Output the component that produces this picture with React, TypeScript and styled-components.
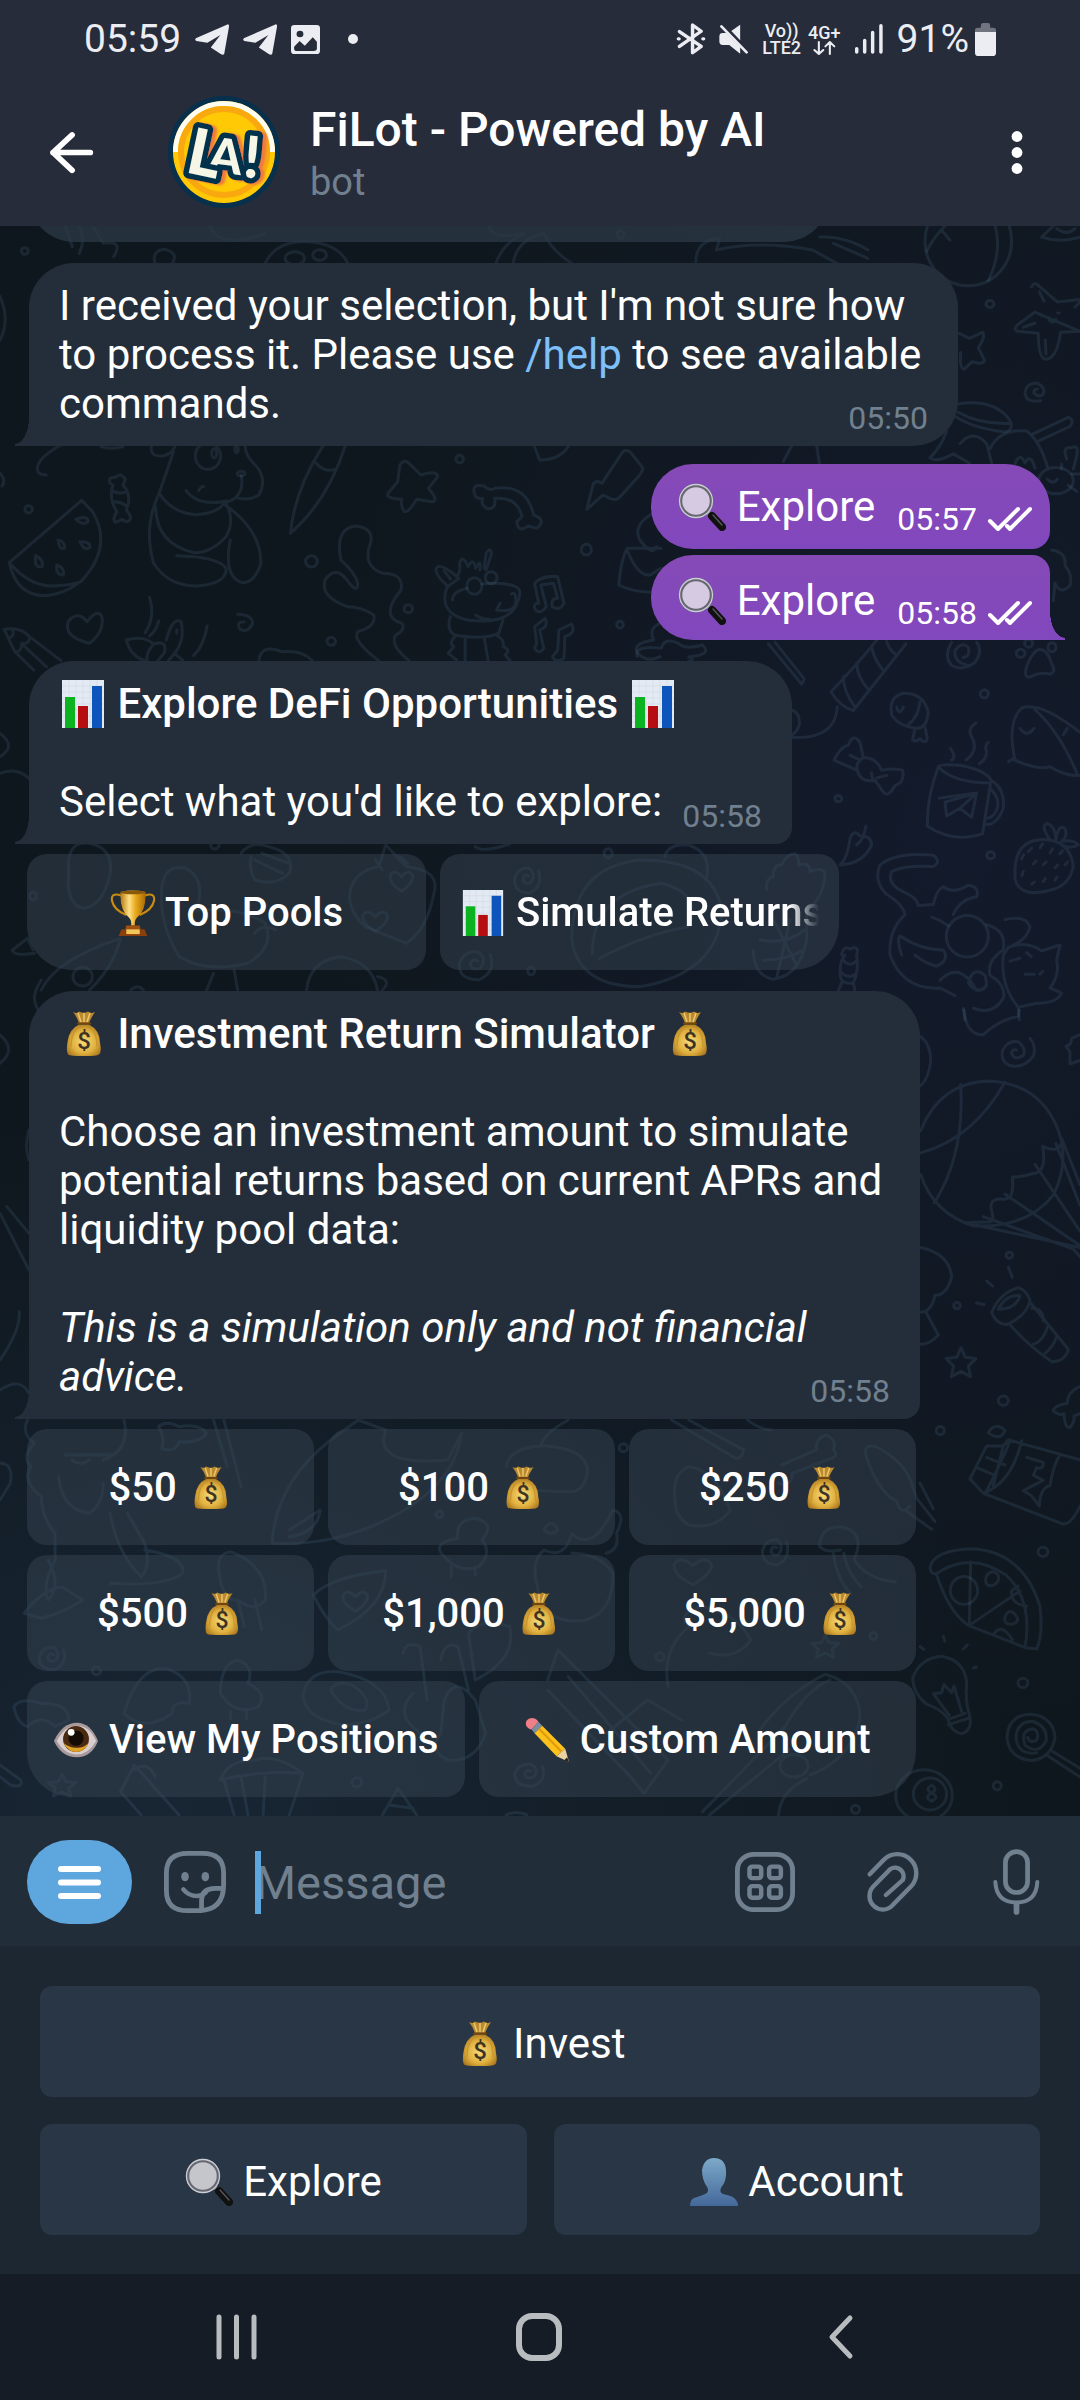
import React from "react";
import styled, { createGlobalStyle, css } from "styled-components";

const GlobalStyle = createGlobalStyle`
  *, *::before, *::after { box-sizing: border-box; }
  body { margin: 0; background: #151c25; }
  button { font: inherit; color: inherit; border: 0; padding: 0; background: none; cursor: pointer; }
`;

const colors = {
  header: "#262c3a",
  bubble: "#232e3a",
  purple: "#8147bd",
  muted: "#71808f",
  link: "#7ec0fb",
  blue: "#5ea6de",
};

const Screen = styled.div`
  display: flex;
  flex-direction: column;
  min-height: 100vh;
  color: #fff;
  font-family: Roboto, "Noto Sans", sans-serif;
  font-size: 42px;
  line-height: 49px;
`;

/* ---------- status bar ---------- */

const StatusBar = styled.div`
  display: flex;
  justify-content: space-between;
  align-items: center;
  height: 78px;
  padding: 0 84px;
  background: ${colors.header};
  color: #ecedf2;
  font-size: 39px;
`;

const Cluster = styled.div<{ $gap: number }>`
  display: flex;
  align-items: center;
  gap: ${(p) => p.$gap}px;
`;

const NetLabel = styled.div`
  display: flex;
  flex-direction: column;
  align-items: center;
  font-size: 18px;
  line-height: 17px;
  font-weight: 500;
`;

/* ---------- header ---------- */

const Header = styled.header`
  display: flex;
  align-items: center;
  height: 148px;
  padding: 0 50px;
  background: ${colors.header};
`;

const IconButton = styled.button`
  display: flex;
  flex: none;
  align-items: center;
  justify-content: center;
`;

const Avatar = styled.svg`
  flex: none;
  width: 112px;
  height: 112px;
  margin: 0 30px 0 75px;
`;

const TitleBlock = styled.div`
  flex: 1;
  min-width: 0;
  padding-top: 4px;
`;

const Title = styled.h1`
  margin: 0;
  font-size: 48px;
  line-height: 56px;
  font-weight: 500;
`;

const Subtitle = styled.div`
  color: ${colors.muted};
  font-size: 38px;
  line-height: 48px;
`;

/* ---------- chat ---------- */

const Chat = styled.main`
  position: relative;
  display: flex;
  flex-direction: column;
  align-items: flex-start;
  overflow: hidden;
  padding: 0 30px 19px 29px;
  background:
    radial-gradient(ellipse 620px 900px at 88% 38%, #131a2b, rgba(19, 26, 43, 0)),
    radial-gradient(ellipse 850px 700px at 15% 100%, #182634, rgba(24, 38, 52, 0)),
    #0f171e;
`;

const Wallpaper = styled.svg`
  position: absolute;
  top: 0;
  left: 0;
  width: 1080px;
  height: 1590px;
  fill: none;
  stroke: rgba(100, 140, 175, 0.15);
  stroke-width: 3;
  stroke-linecap: round;
  stroke-linejoin: round;
  & * { vector-effect: non-scaling-stroke; }
`;

const Bubble = styled.div<{ $max?: number; $radius?: string; $spaced?: boolean }>`
  position: relative;
  width: ${(p) => (p.$max ? "100%" : "auto")};
  max-width: ${(p) => (p.$max ? p.$max + "px" : "100%")};
  margin-top: ${(p) => (p.$spaced ? 21 : 0)}px;
  padding: 18px 30px;
  background: ${colors.bubble};
  border-radius: ${(p) => p.$radius ?? "45px 45px 45px 0"};
  &::before {
    content: "";
    position: absolute;
    left: -14px;
    bottom: 0;
    width: 14px;
    height: 28px;
    background: radial-gradient(ellipse 14px 26px at 0 0, transparent 98%, ${colors.bubble} 100%);
  }
`;

const EarlierBubble = styled.div`
  position: relative;
  width: 100%;
  max-width: 800px;
  height: 90px;
  margin: -74px 0 21px;
  border-radius: 45px;
  background: rgba(44, 57, 71, 0.75);
`;

const Outgoing = styled.div<{ $last?: boolean }>`
  position: relative;
  align-self: flex-end;
  background: linear-gradient(#864ab7, ${colors.purple});
  ${(p) =>
    p.$last
      ? css`
          margin-top: 6px;
          padding: 21px 18px 15px 27px;
          border-radius: 42px 18px 0 42px;
          &::before {
            content: "";
            position: absolute;
            right: -15px;
            bottom: 0;
            width: 15px;
            height: 28px;
            background: radial-gradient(ellipse 15px 26px at 100% 0, transparent 98%, ${colors.purple} 100%);
          }
        `
      : css`
          margin-top: 18px;
          padding: 18px 18px 18px 27px;
          border-radius: 42px 45px 18px 42px;
        `}
`;

const Time = styled.time<{ $light?: boolean }>`
  float: right;
  display: flex;
  align-items: center;
  gap: 11px;
  margin: ${(p) => (p.$light ? "21px 0 -6px 22px" : "23px 0 -6px 20px")};
  color: ${(p) => (p.$light ? "#fff" : colors.muted)};
  font-size: 32px;
  line-height: 32px;
  font-weight: 400;
`;

const Strong = styled.strong`
  font-weight: 500;
`;

const Command = styled.a`
  color: ${colors.link};
  text-decoration: none;
`;

const Keyboard = styled.div<{ $max: number }>`
  position: relative;
  display: flex;
  flex-direction: column;
  gap: 10px;
  width: 100%;
  max-width: ${(p) => p.$max}px;
  margin: 10px 0 21px -2px;
  &:last-child { margin-bottom: 0; }
`;

const KeyRow = styled.div`
  display: grid;
  grid-auto-flow: column;
  grid-auto-columns: minmax(0, 1fr);
  gap: 14px;
  &:last-child > button:first-child { border-bottom-left-radius: 45px; }
  &:last-child > button:last-child { border-bottom-right-radius: 45px; }
`;

const Key = styled.button`
  height: 116px;
  padding: 2px 20px 0;
  border-radius: 20px;
  background: rgba(54, 67, 81, 0.5);
  font-size: 40px;
  font-weight: 500;
`;

const KeyLabel = styled.span<{ $fade?: boolean }>`
  display: block;
  white-space: nowrap;
  line-height: 56px;
  ${(p) =>
    p.$fade &&
    css`
      overflow: hidden;
      text-align: left;
      mask-image: linear-gradient(to right, #000 calc(100% - 30px), transparent);
    `}
`;

/* ---------- composer ---------- */

const Composer = styled.form`
  display: flex;
  align-items: center;
  height: 130px;
  padding: 2px 40px 0 27px;
  background: #222d3a;
  color: ${colors.muted};
`;

const MenuButton = styled(IconButton)`
  width: 105px;
  height: 84px;
  margin-right: 32px;
  border-radius: 42px;
  background: ${colors.blue};
`;

const Field = styled.div`
  position: relative;
  flex: 1;
  min-width: 0;
  margin-left: 29px;
  &::after {
    content: "";
    position: absolute;
    left: 0;
    top: 0;
    width: 6px;
    height: 63px;
    background: ${colors.blue};
  }
`;

const Input = styled.input`
  display: block;
  width: 100%;
  height: 63px;
  padding: 0;
  border: 0;
  outline: 0;
  background: none;
  color: #fff;
  font: 400 47px/63px Roboto, "Noto Sans", sans-serif;
  &::placeholder { color: ${colors.muted}; opacity: 1; }
`;

const ComposerTools = styled.div`
  display: flex;
  align-items: center;
  gap: 73px;
`;

/* ---------- reply keyboard ---------- */

const ReplyPanel = styled.section`
  display: grid;
  grid-template-columns: 1fr 1fr;
  gap: 27px;
  padding: 40px 40px 39px;
  background: #1d2731;
`;

const ReplyKey = styled.button<{ $wide?: boolean }>`
  grid-column: ${(p) => (p.$wide ? "1 / -1" : "auto")};
  height: 111px;
  padding-top: 4px;
  border-radius: 12px;
  background: #293645;
`;

const NavBar = styled.nav`
  display: flex;
  flex: 1;
  align-items: center;
  justify-content: space-between;
  min-height: 126px;
  padding: 0 227px 0 216px;
  background: #151c25;
  color: #b9bcbf;
`;

/* ---------- drawings ---------- */

const EmojiBox = styled.svg<{ $size: number }>`
  display: inline-block;
  width: ${(p) => p.$size}px;
  height: ${(p) => p.$size}px;
  vertical-align: baseline;
  margin: -10px 0;
`;

const emojiArt: Record<string, React.ReactNode> = {
  bag: (
    <>
      <path d="M14 2 Q18 4 20 1.500 Q25 4 29 1.500 Q32 4 36 2 Q32 8 30 13 H20 Q18 7 14 2Z" fill="#bb8a2c" />
      <path d="M19 3 L22 12 M25 3 V12 M31 3 L28 12" stroke="#ecc872" strokeWidth="1.500" />
      <path d="M20 14.500 H30 Q41 20 41 33 Q43 42 40 44.500 Q38 46 25 46 Q11 46 9 44.500 Q7 41 8.500 32 Q10 19 20 14.500Z" fill="url(#bagFill)" />
      <path d="M18 18 Q12 25 12 37 M33 18 Q38 26 38 37" stroke="#c9942f" strokeWidth="1.300" fill="none" />
      <path d="M19 13.500 H31" stroke="#70450f" strokeWidth="2.200" strokeLinecap="round" />
      <text x="25" y="39" textAnchor="middle" fontFamily="Roboto, sans-serif" fontWeight="500" fontSize="24" fill="#3f3424">$</text>
    </>
  ),
  lens: (
    <>
      <path d="M30 29 L36 35" stroke="#8d8d92" strokeWidth="4" />
      <path d="M34 33 L44 44" stroke="#111" strokeWidth="8" strokeLinecap="round" />
      <path d="M35 32 L44 42" stroke="#55555a" strokeWidth="1.500" strokeLinecap="round" />
      <circle cx="18" cy="18" r="15.500" fill="#e6e6ea" fillOpacity=".82" stroke="#67676f" strokeWidth="3.500" />
      <circle cx="18" cy="18" r="16.500" fill="none" stroke="#c9ced6" strokeWidth="1.300" />
    </>
  ),
  chart: (
    <>
      <rect x="3" y="0" width="42" height="48" fill="#e3eaf3" />
      <path d="M3 6H45M3 12H45M3 18H45M3 24H45M3 30H45M3 36H45M3 42H45M10 0V48M17 0V48M24 0V48M31 0V48M38 0V48" stroke="#d3dbe6" strokeWidth=".7" />
      <rect x="6" y="17" width="10" height="31" fill="#0bb321" />
      <rect x="19" y="26" width="10" height="22" fill="#b60d10" />
      <rect x="33" y="6" width="10" height="42" fill="#0d55bd" />
    </>
  ),
  trophy: (
    <>
      <path d="M12 6 Q1 2 2 11 Q4 21 17 26 M36 6 Q47 2 46 11 Q44 21 31 26" stroke="#c98a12" strokeWidth="2.200" fill="none" />
      <path d="M11 2 Q24 -1 37 2 Q38 22 28 29 Q25 32 26 37 H22 Q23 32 20 29 Q10 22 11 2Z" fill="url(#cupFill)" />
      <ellipse cx="24" cy="2.500" rx="13" ry="2" fill="#8a5a08" />
      <path d="M17 37 H31 L32 41 H16Z" fill="#a2500f" />
      <path d="M12 41 H36 L39 48 H9Z" fill="#8a3f0c" />
      <rect x="17" y="41" width="14" height="5" fill="#f2c65a" />
    </>
  ),
  eye: (
    <>
      <path d="M1 25 Q10 6 25 6 Q39 6 47 25 Q40 42 25 42 Q9 42 1 25Z" fill="#a8999b" />
      <path d="M4 25 Q12 9 25 9 Q38 9 45 25 Q37 39 25 39 Q12 39 4 25Z" fill="#d9cfd1" />
      <circle cx="24" cy="23" r="13.500" fill="#4a2a10" />
      <path d="M11 27 Q16 36.500 24 36.500 Q33 36.500 37 27 Q31 33 24 32 Q17 32 11 27Z" fill="#e0a224" />
      <circle cx="24" cy="22" r="8" fill="#160c05" />
      <circle cx="19" cy="16" r="3.500" fill="#fff" />
    </>
  ),
  pencil: (
    <>
      <path d="M2 8 Q1 2 8 1 Q13 1 15 5 L8 13 Q3 12 2 8Z" fill="#ee7f86" />
      <path d="M15 5 L19 9 L11 17 L8 13Z" fill="#7b8ea0" />
      <path d="M19 9 L43 33 L34 41 L11 17Z" fill="#fcc21b" />
      <path d="M16 12.500 L39 36" stroke="#e29b0c" strokeWidth="2.500" />
      <path d="M43 33 L47 47 L34 41Z" fill="#ecd2a0" />
      <path d="M45 42 L47 47 L42 45Z" fill="#222" />
    </>
  ),
  person: (
    <path
      d="M24 0 Q35 0 36 12 Q37 23 31 30 Q29 34 33 36 Q44 38 46 42 Q48 44 48 48 H0 Q0 42 4 40 Q14 37 17 35 Q19 32 17 29 Q12 22 12 12 Q14 0 24 0Z"
      fill="url(#personFill)"
    />
  ),
};

const Emoji = ({ name, size = 48 }: { name: string; size?: number }) => (
  <EmojiBox $size={size} viewBox="0 0 48 48" aria-hidden="true">
    {emojiArt[name]}
  </EmojiBox>
);

type GlyphProps = { w: number; h: number; box: string; children: React.ReactNode };
const Glyph = ({ w, h, box, children }: GlyphProps) => (
  <svg width={w} height={h} viewBox={box} preserveAspectRatio="none" fill="none" stroke="currentColor" strokeLinecap="round" strokeLinejoin="round" overflow="visible" aria-hidden="true">
    {children}
  </svg>
);

const Plane = () => (
  <Glyph w={34} h={31} box="567 76 99 91">
    <path d="M663 77 Q667 78 666 84 L652 164 Q650 168 643 165 L613 145 L641 108 L603 131 L571 126 Q564 122 571 117Z" fill="currentColor" stroke="none" />
  </Glyph>
);

const Checks = () => (
  <Glyph w={44} h={24} box="0 0 44 24">
    <path d="M2 14 L10 22 L30 2 M19 19 L22 22 L42 2" strokeWidth="4" />
  </Glyph>
);

const starPath = "M0 -26 L8 -8 L28 -6 L14 8 L18 28 L0 18 L-18 28 L-14 8 L-28 -6 L-8 -8Z";
const spiralPath = "M24 -14 Q34 14 6 26 Q-26 26 -26 2 Q-20 -20 4 -18 Q20 -8 8 8 Q-8 12 -8 0 Q-4 -8 4 -4";
const heartPath = "M0 34 Q-34 10 -30 -14 Q-20 -34 0 -10 Q20 -36 30 -12 Q30 10 0 34Z";

const Doodles = () => (
  <Wallpaper viewBox="0 226 1080 1590" aria-hidden="true">
    <defs>
      <radialGradient id="bagFill" cx=".5" cy=".55" r=".6">
        <stop offset="0" stopColor="#f6dc7c" />
        <stop offset=".6" stopColor="#e0b13f" />
        <stop offset="1" stopColor="#a8741c" />
      </radialGradient>
      <linearGradient id="cupFill" x1="0" x2="1" y1="0" y2="0">
        <stop offset="0" stopColor="#b87a0a" />
        <stop offset=".35" stopColor="#ffe08a" />
        <stop offset=".6" stopColor="#e9a91c" />
        <stop offset="1" stopColor="#a86a06" />
      </linearGradient>
      <linearGradient id="personFill" x1="0" x2="0" y1="0" y2="1">
        <stop offset="0" stopColor="#7da9c8" />
        <stop offset="1" stopColor="#44689a" />
      </linearGradient>
    </defs>

    {/* strip under the header */}
    <g transform="translate(0 220) scale(.6888 .3333)">
      <path d="M95 20 L105 80 M115 20 Q125 60 115 100 M135 20 L150 70 Q180 60 165 110 M305 20 Q320 90 385 40 M225 130 Q220 90 240 88 Q260 100 250 130 M385 130 Q400 65 440 65 Q490 65 505 130 M710 20 Q715 60 760 40 Q730 70 720 130 M745 130 Q750 60 790 40 Q800 90 830 130 M1010 130 Q1010 60 1045 55 L1040 90 Q1100 60 1180 90 L1215 130 M1190 50 Q1230 50 1260 90 M1210 70 L1260 115" />
      <ellipse cx="428" cy="115" rx="14" ry="20" />
      <ellipse cx="464" cy="105" rx="10" ry="16" />
      <ellipse cx="36" cy="93" rx="5" ry="10" />
      <ellipse cx="901" cy="43" rx="5" ry="12" />
      <path d="M0 230 Q15 300 0 360" />
    </g>

    {/* right column, upper half */}
    <g transform="translate(760 226) scale(.3333 .5063)">
      <ellipse cx="625" cy="30" rx="130" ry="88" />
      <path d="M685 108 Q735 40 695 -20 M500 50 Q530 10 590 -20 M545 8 l25 20 M845 22 L880 0 M845 22 Q900 34 960 22 M890 5 Q920 20 945 5" />
      <path d="M815 120 Q822 108 840 120 L892 150 L960 145 M960 208 L902 210 Q890 264 856 263 Q835 262 835 212 L772 208 Q758 203 775 194 L825 170 Z M945 160 L960 150 M868 186 Q880 194 888 184 M845 178 h5 M893 172 h5 M856 225 l2 28 M790 200 l35 -8 M838 130 l14 18" />
      <path d="M598 212 L628 222 L668 210 Q678 218 655 240 L674 266 Q665 275 637 268 L612 283 Q598 280 602 250" />
      <path d="M842 345 Q795 350 795 328 Q800 310 830 310 Q858 318 850 332 Q835 340 822 330 Q820 322 832 322" />
      <path d="M588 352 Q700 340 748 382 Q765 402 735 407 Q640 400 585 376 M595 368 Q660 392 748 390" />
      <path d="M560 405 Q545 435 510 458 Q530 468 580 450 L628 468 M600 430 Q640 400 680 430 L695 468 M690 440 Q720 400 800 405 Q840 425 862 475 M815 412 Q870 395 925 378 Q945 382 930 396 L835 425 M765 470 Q780 445 795 468 Q812 448 825 478 M920 460 Q905 435 935 438 Q958 430 950 455 L940 480" />
      <ellipse cx="888" cy="503" rx="52" ry="26" />
      <path d="M862 500 Q880 512 892 500 M70 465 L95 434 M170 434 L178 468 M905 480 V470 M935 490 h25 M925 512 l25 12" />
      <path d="M875 640 Q920 645 915 670 Q940 690 930 710 Q900 730 885 705 L880 740" />
      <path d="M25 825 L125 905 L133 895 L45 822 M213 920 Q300 860 350 818 M213 920 Q240 950 280 957 L438 825 M250 890 Q250 920 285 950 M290 862 Q290 890 325 915 M335 830 Q340 855 372 880 M380 820 Q385 835 405 845 M232 950 Q225 1015 95 1010 M92 955 Q120 960 118 985 Q108 1005 90 1005" />
      <path d="M575 822 Q550 850 575 868 Q610 880 645 862 Q670 840 650 822 M625 868 Q580 862 585 838 Q605 820 625 832 Q632 850 610 852" />
      <path d="M800 870 Q790 895 812 890 Q840 880 870 885 Q890 880 875 865 Q860 830 830 838 Q810 850 800 870Z" />
      <ellipse cx="782" cy="844" rx="13" ry="8" />
      <ellipse cx="806" cy="824" rx="12" ry="8" />
      <ellipse cx="876" cy="832" rx="12" ry="9" />
      <path d="M395 965 Q385 930 430 923 Q490 922 505 960 Q500 995 465 992 Q410 985 395 965Z M410 950 q8 20 20 0 M480 940 Q475 970 445 985 M465 992 L458 1015 Q470 1020 480 1012 Q495 1025 502 1012 L495 990" />
      <path d="M222 1055 Q240 1030 265 1025 Q280 1000 300 1020 L310 1050 Q350 1050 365 1075 Q400 1070 428 1075 Q435 1100 405 1105 Q385 1130 370 1118 L345 1095 Q300 1100 292 1075 Z M310 1050 Q285 1060 292 1075 M335 1080 Q335 1095 345 1095 M270 1045 l30 10 M350 1090 l30 -5" />
      <path d="M535 1068 Q500 1130 502 1185 Q580 1220 668 1200 L693 1095 Q680 1075 600 1065 Q540 1062 535 1068 Q580 1100 690 1100 M693 1095 Q735 1110 730 1150 Q710 1185 675 1182 M692 1112 Q720 1130 712 1150 Q700 1170 680 1170 M538 1130 L650 1120 L635 1168 L600 1150 L560 1165 L555 1138 M600 1150 L650 1120 L555 1138 M575 1055 Q590 1050 572 1032 M618 1055 Q660 1035 632 1005 Q625 990 648 982 M658 1062 Q685 1050 678 1035 Q675 1025 685 1020" />
      <path d="M745 1058 Q760 1050 765 1055 Q740 980 785 952 Q840 938 960 1000 M765 1055 Q830 1075 870 1068 Q920 1088 960 1085 M825 955 Q900 1000 950 1080 M780 992 Q800 1012 822 992 M910 1005 L922 992" />
      <path d="M240 1262 Q262 1250 270 1210 Q280 1190 300 1205 Q335 1205 335 1222 Q310 1260 240 1262 M290 1222 Q310 1215 318 1185" />
      <path d="M765 1270 Q770 1215 840 1212 Q930 1210 940 1265 Q930 1300 880 1310 Q780 1330 765 1290Z M870 1212 Q840 1185 862 1180 Q885 1185 888 1212 Q895 1180 915 1190 Q925 1205 905 1215 Q940 1212 955 1222 Q930 1232 905 1222" />
      <path d="M785 1250 l6 -8 M805 1235 l10 -6 M840 1228 l8 -8 M870 1238 l8 -8 M900 1240 l8 -6 M790 1275 l-4 8 M820 1260 l8 -6 M850 1262 l8 -6 M885 1268 l8 -6 M915 1262 l8 -6 M815 1300 l8 -4 M850 1295 l6 -6 M885 1292 l6 -6" />
      <path d="M435 1360 Q430 1340 380 1320 Q340 1295 360 1262 Q410 1235 520 1243 Q545 1255 520 1265 Q430 1262 395 1275 Q380 1300 430 1315 Q470 1325 475 1342 L520 1340 Q530 1310 550 1305 Q580 1320 625 1302 Q660 1305 650 1325 Q600 1330 580 1360 M435 1360 Q385 1390 390 1440 Q430 1510 540 1505 L585 1520 M425 1440 Q410 1410 420 1402 Q480 1430 550 1430 Q570 1450 530 1462 Q500 1458 465 1440 M515 1365 Q540 1370 565 1382" />
      <ellipse cx="622" cy="1403" rx="63" ry="41" />
      <path d="M680 1380 Q740 1390 730 1430 Q680 1450 690 1480 Q740 1500 730 1525 Q700 1560 640 1545 M735 1370 Q800 1360 810 1385 Q800 1410 760 1420 M730 1440 Q720 1500 775 1543 L830 1535 Q890 1535 905 1515 L870 1505 Q900 1480 890 1450 L900 1420 L845 1432 Q800 1410 745 1425Z M750 1452 l30 -6 M800 1435 l14 8 M795 1478 l28 0 M840 1478 l8 -6 M540 1490 Q600 1450 650 1510 Q690 1510 675 1480 Q640 1460 625 1495 Q650 1520 680 1500 M610 1545 L615 1568 M775 1543 L778 1568" />
      <path d="M245 1440 Q250 1420 268 1428 Q300 1420 290 1440 Q298 1470 280 1495 Q240 1500 240 1475 Q240 1450 255 1440 M250 1450 Q270 1465 288 1452 M245 1475 Q265 1488 285 1478 M245 1495 L235 1510 M280 1495 L285 1510" />
      <ellipse cx="690" cy="154" rx="12" ry="7" />
      <ellipse cx="673" cy="924" rx="12" ry="8" />
      <ellipse cx="235" cy="1131" rx="10" ry="6" />
      <ellipse cx="692" cy="1243" rx="12" ry="7" />
      <path d="M20 1310 Q15 1290 40 1285 Q40 1260 65 1262 Q80 1240 105 1240 Q120 1250 115 1262 Q150 1255 150 1275 Q190 1265 195 1280 Q190 1330 140 1350 L140 1410 Q120 1480 40 1488 Q-20 1480 -20 1430 M0 1410 Q80 1420 135 1390 M10 1450 Q80 1450 130 1430 M90 1370 L50 1485 M40 1370 L110 1460" />
    </g>

    {/* right column, lower half */}
    <g transform="translate(760 1010) scale(.3333 .5141)">
      <path d="M612 0 Q620 50 670 48 Q715 20 775 12 L778 0 M482 52 Q512 65 512 100 Q505 135 482 147" />
      <path d="M810 55 Q830 70 820 90 Q790 115 750 108 Q720 100 728 78 Q745 58 775 62 Q800 75 790 88 Q765 100 755 85 Q755 75 770 78" />
      <path d="M960 48 L935 55 Q935 70 918 70 L930 82 L930 105 L960 98" />
      <path d="M482 235 Q540 140 690 138 Q860 145 905 255 Q920 310 880 360 Q800 425 640 420 Q520 395 482 320 M602 145 Q615 280 523 375 M482 278 Q640 250 735 140 M905 258 Q895 280 848 265 Q862 315 820 318 Q780 325 757 325 Q765 370 730 368 Q690 365 693 385 Q705 410 690 412 L615 414 L960 462 M888 260 L960 380 M905 250 L960 340 M825 300 L960 430 M735 358 L960 458 M670 402 L940 465 L960 480" />
      <path d="M482 462 Q570 475 575 520 Q560 555 525 555 Q520 575 500 585 L482 588 M500 590 Q520 615 535 632 Q510 650 482 650" />
      <path d="M695 588 Q720 550 775 540 Q800 545 810 565 Q800 595 740 612 Q705 610 695 588Z M715 582 Q740 552 780 556 Q770 580 720 582 M750 612 Q800 650 875 684 Q915 684 925 660 L812 570 M815 580 Q850 580 850 605 M865 612 Q850 645 820 650 M890 635 Q880 655 855 668 M745 500 l12 20 M680 527 l18 10 M650 570 l22 3" />
      <path transform="translate(603 684) scale(1.600 1.050)" d={starPath} />
      <path d="M960 732 Q920 745 922 765 Q880 770 880 780 Q900 790 912 785 Q915 815 930 812 Q945 800 942 790 L960 785" />
      <path d="M630 912 L680 848 L730 848 L745 836 L960 875 M630 912 L670 940 L910 1000 Q935 1000 960 965 M670 940 Q755 920 785 838 M680 935 Q725 880 750 838 M680 870 L735 885 M650 890 L705 905 M730 848 L700 925 M685 822 Q705 800 735 818 Q720 840 685 822 M800 870 L850 880 Q850 895 830 890 L820 905 L850 915 L790 935 L815 945 L838 965 Q840 930 870 925 Q880 885 900 865" />
      <path d="M510 1085 Q520 1050 640 1048 Q790 1055 840 1160 Q850 1215 830 1243 L795 1240 Q820 1150 740 1100 Q640 1055 545 1090 Q515 1105 510 1085 M530 1098 Q565 1170 625 1197 L795 1240 M632 1073 L628 1197 L780 1130 M700 1215 Q725 1190 757 1225 M800 1160 Q750 1155 755 1130 L775 1120" />
      <ellipse cx="612" cy="1129" rx="41" ry="27" />
      <path d="M680 1100 Q700 1085 715 1100 Q720 1115 695 1120 Q670 1120 680 1100Z M735 1180 Q750 1160 770 1180 Q780 1190 755 1195 Q730 1195 735 1180Z" />
      <path d="M565 1380 Q550 1362 500 1350 Q460 1330 458 1300 Q480 1260 545 1257 Q615 1265 620 1310 Q615 1345 628 1370 Q640 1400 605 1408 Q570 1402 565 1380 L615 1368 M565 1390 L625 1378 M568 1372 L520 1330 L545 1328 L552 1312 L575 1328 L582 1315 L605 1365 M550 1218 l5 10 M480 1238 l12 6 M610 1243 l12 -8 M640 1280 l10 -2" />
      <path d="M741 1415 Q745 1370 815 1370 Q880 1375 885 1415 Q875 1455 815 1460 Q745 1455 741 1415Z M830 1445 Q770 1450 768 1412 Q775 1382 820 1384 Q865 1395 858 1422 Q835 1450 795 1430 Q780 1400 820 1398 Q840 1405 830 1420 Q810 1428 803 1415 M872 1440 L960 1475 M862 1450 L960 1492" />
      <ellipse cx="492" cy="1528" rx="85" ry="50" />
      <ellipse cx="510" cy="1525" rx="50" ry="31" />
      <path d="M515 1508 q20 8 0 15 q-22 -8 0 -15 M515 1523 q25 8 0 16 q-25 -8 0 -16" />
      <path d="M325 880 Q300 840 350 850 Q440 880 460 930 L470 950 L525 995 M440 975 L515 1010 M480 920 L520 970 M325 880 Q360 940 410 955 Q420 985 450 965" />
      <path d="M55 1568 Q60 1520 140 1495 M0 1400 Q80 1330 195 1292 Q300 1310 300 1380 Q270 1460 150 1488" />
      <ellipse cx="102" cy="1470" rx="42" ry="22" />
      <ellipse cx="748" cy="477" rx="10" ry="6" />
      <ellipse cx="591" cy="575" rx="10" ry="6" />
      <ellipse cx="730" cy="760" rx="15" ry="9" />
      <ellipse cx="541" cy="818" rx="12" ry="8" />
      <ellipse cx="849" cy="1054" rx="15" ry="9" />
      <ellipse cx="789" cy="1309" rx="15" ry="9" />
      <ellipse cx="712" cy="1509" rx="12" ry="8" />
    </g>

    {/* gap left of the outgoing messages */}
    <g transform="translate(0 440) scale(.4209 .3333)">
      <path d="M145 15 Q80 60 90 95 Q95 105 110 105 M240 20 Q265 30 292 20 M0 100 Q15 120 5 138" />
      <path d="M262 130 Q255 110 275 112 Q285 95 298 118 L292 135 Q315 165 300 210 Q320 240 300 245 L290 238 L275 247 Q265 240 278 215 Q258 180 268 135 M265 152 Q285 165 300 155 M270 185 Q290 185 302 200" />
      <path d="M194 181 L22 368 Q75 445 135 437 Q175 435 192 425 Q270 320 220 215Z M22 368 Q40 470 110 467 Q155 460 185 430" />
      <path d="M180 238 Q205 225 210 243 Q200 260 180 238 M138 300 Q155 305 153 325 Q140 330 138 300 M190 305 Q215 305 214 322 Q200 335 190 305 M85 347 Q105 360 100 380 Q80 385 85 347 M135 375 Q155 385 150 405 Q132 405 135 375" />
      <path d="M412 35 Q395 100 378 160 Q340 260 365 370 Q400 440 470 438 Q540 430 537 385 Q520 350 420 347 M378 160 Q410 220 465 224 Q520 220 535 185 Q560 240 537 290 Q500 340 460 338 Q370 310 370 200 M360 20 Q355 50 385 48 Q405 45 415 22 M535 195 Q620 270 620 370 Q605 430 575 428 Q530 410 547 300 M583 15 Q580 45 610 80 Q635 120 615 165 Q590 185 560 172 Q580 150 573 105 M442 152 Q470 200 540 183 M472 152 Q480 135 484 140 M560 172 Q550 185 535 187" />
      <ellipse cx="494" cy="48" rx="30" ry="40" />
      <ellipse cx="509" cy="40" rx="6" ry="14" />
      <ellipse cx="562" cy="28" rx="4" ry="10" />
      <ellipse cx="573" cy="101" rx="9" ry="7" />
      <path d="M767 18 Q700 150 690 280 Q780 180 820 18 M748 65 Q770 100 795 88" />
      <path d="M950 75 Q960 55 972 70 L1000 105 Q1040 90 1040 110 L1018 145 Q1045 185 1025 185 L990 178 Q970 220 960 215 Q950 190 955 178 Q915 175 922 160 L945 125Z" />
      <path d="M1127 160 Q1120 130 1150 138 Q1165 155 1175 145 Q1250 130 1268 225 Q1300 240 1275 265 L1255 258 Q1230 280 1228 245 L1240 230 Q1230 170 1175 175 Q1180 205 1160 207 Q1140 195 1147 175 Q1130 178 1127 160Z" />
      <path d="M1480 35 Q1490 25 1500 40 L1525 80 Q1530 90 1520 105 L1470 175 Q1460 185 1433 165 L1394 208 L1410 130 Q1420 120 1430 130Z M1270 20 L1282 60 Q1330 60 1350 20" />
      <path d="M1565 210 Q1500 250 1520 300 Q1550 350 1560 320 M1570 325 H1490 Q1475 360 1470 435 Q1500 455 1550 457 M1490 330 Q1515 410 1545 405 L1570 385 M1568 550 Q1540 565 1553 600 Q1500 610 1515 640 Q1540 670 1568 650" />
      <path d="M900 662 Q835 600 850 575 Q895 560 888 525 Q860 500 825 500 Q760 470 772 420 Q800 370 830 430 Q850 460 850 430 Q845 400 810 360 Q795 265 845 258 Q890 265 880 310 Q860 380 910 400 Q960 400 953 450 Q900 530 955 550 Q965 570 940 585 Q925 615 972 662" />
      <path d="M1065 440 Q1025 395 1040 380 Q1055 375 1085 410 Q1095 395 1092 370 Q1098 340 1112 380 Q1125 350 1130 385 Q1145 350 1140 390 M1150 385 L1155 340 Q1165 320 1168 340 L1155 390 M1062 440 Q1040 520 1110 540 Q1200 555 1225 500 Q1245 450 1225 440 Q1200 425 1145 432 M1090 415 Q1075 430 1062 440 M1075 480 Q1075 455 1110 445 M1215 462 Q1225 455 1225 475 Q1230 520 1180 510 L1188 490 M1070 530 Q1060 570 1080 585 Q1150 600 1185 580 L1195 540 M1130 525 Q1145 540 1165 538 M1105 590 V662 M1150 590 L1160 662 M1082 588 Q1065 610 1078 620 L1065 640 L1085 660 M1182 588 Q1200 600 1195 620 Q1215 630 1200 645 L1212 662 M1055 392 l15 25" />
      <ellipse cx="1127" cy="438" rx="18" ry="25" />
      <ellipse cx="1167" cy="413" rx="14" ry="18" />
      <path d="M1280 490 L1270 430 Q1290 405 1325 410 L1340 490 Q1330 515 1312 500 Q1308 475 1325 475 L1315 430 L1285 435 L1298 500 Q1285 525 1272 510 Q1265 490 1280 490 M1275 610 L1270 560 L1295 535 Q1305 560 1282 570 L1292 625 Q1280 645 1270 625Z M1325 630 L1328 570 L1358 552 Q1370 580 1342 590 L1340 655 Q1320 670 1313 650Z" />
      <path d="M207 545 Q235 500 243 535 Q245 580 212 610 Q150 590 162 545 Q185 510 207 545Z" />
      <path d="M565 523 Q600 525 600 550 Q590 580 570 568 Q560 545 580 545 M355 472 Q370 530 345 578 M377 543 Q370 575 355 588 M492 558 Q485 615 460 647" />
      <path d="M395 600 Q410 530 430 545 Q440 600 415 640 L435 662 M300 600 Q340 585 365 612 Q400 600 390 640 L375 662 M300 600 Q310 650 345 662 M365 612 Q345 640 350 662 M420 570 v10 M415 640 L400 662" />
      <path d="M10 568 Q50 560 70 590 L145 662 M10 568 L35 635 L80 690 M35 635 Q50 640 52 610 Q70 615 70 590 M52 612 L110 680 M20 595 Q35 590 30 572 M615 662 Q620 610 670 635 Q720 630 742 662" />
      <ellipse cx="68" cy="208" rx="9" ry="11" />
      <ellipse cx="740" cy="364" rx="14" ry="17" />
      <ellipse cx="1092" cy="57" rx="9" ry="12" />
      <ellipse cx="1393" cy="329" rx="12" ry="16" />
      <ellipse cx="970" cy="506" rx="10" ry="12" />
      <ellipse cx="787" cy="604" rx="10" ry="12" />
      <ellipse cx="1473" cy="554" rx="8" ry="10" />
    </g>

    {/* around the first inline keyboard */}
    <g transform="translate(0 640) scale(.6888 .3333)">
      <path d="M925 50 Q920 15 960 25 Q965 -10 985 10 Q995 30 1020 15 Q1035 45 1000 50 Q1010 62 1000 64 M0 280 Q25 320 0 350 M0 400 Q25 380 42 415" />
      <path d="M100 700 Q95 600 130 610 Q165 625 160 700 Q150 800 120 805 Q95 790 100 700Z M350 640 Q365 600 390 620 Q430 640 420 700 Q400 740 370 720 Q360 680 365 650 M370 660 L410 700 M380 640 L420 670" />
      <path d="M235 740 Q240 670 270 685 Q300 720 285 810 M285 810 Q350 800 385 850 Q400 920 360 970 Q300 1000 260 950 Q230 850 235 740 M370 880 Q380 850 400 870 M310 1000 L300 1050 M340 990 L345 1050 M445 1050 Q450 960 495 950 Q540 965 548 1050 M548 1010 Q570 1020 555 1050" />
      <path d="M510 740 Q520 690 550 680 L560 615 L590 680 Q640 690 630 760 Q620 870 590 910 L530 860 Q500 800 510 740Z M545 660 l10 30 M580 650 l12 20" />
      <path transform="translate(583 720) scale(.55 1)" d={heartPath} />
      <path transform="translate(545 840) scale(.6 1)" d={heartPath} />
      <path transform="translate(765 715) scale(.7 1.700)" d={spiralPath} />
      <path transform="translate(690 970) scale(.9 1.900)" d={spiralPath} />
      <path d="M830 900 Q830 680 930 660 Q1040 660 1048 820 Q1040 1000 930 1040 Q840 1040 830 900Z M860 940 Q860 760 960 730 Q1020 760 1000 860 Q940 880 870 955 M965 650 Q970 610 1000 615 Q1035 640 1025 720 M690 620 Q700 640 740 612" />
      <path d="M60 1050 Q80 960 175 895 Q165 980 130 1050 M50 940 Q20 950 18 930 L40 895 L48 930 M190 1050 Q200 1030 208 1050" />
      <ellipse cx="120" cy="1010" rx="14" ry="28" />
      <ellipse cx="312" cy="615" rx="6" ry="12" />
      <ellipse cx="883" cy="640" rx="6" ry="14" />
      <ellipse cx="771" cy="993" rx="5" ry="12" />
      <ellipse cx="48" cy="768" rx="5" ry="12" />
    </g>
    <g transform="translate(0 980) scale(.6888 .3333)">
      <path d="M0 165 Q25 210 0 250 M42 450 Q35 500 42 540 M0 700 L42 870 M10 680 L42 760 M0 1140 Q30 1050 28 995 M0 1230 Q30 1190 42 1240 M60 100 Q40 60 60 0" />
    </g>

    {/* behind the amounts keyboard */}
    <g transform="translate(0 1400) scale(.6888 .3333)">
      <path d="M0 190 Q20 190 15 250 L0 300 M40 60 Q30 100 50 130 Q30 170 45 200 Q30 240 60 290 Q60 350 80 400 L80 480 Q60 560 70 600 Q90 560 70 480 M180 60 Q190 150 150 180 M95 165 L165 165 M105 180 Q115 200 130 180 M85 230 Q90 330 130 340 Q150 310 150 250 M160 340 Q170 460 205 530 Q220 500 210 430 L185 340 M210 450 Q270 470 265 520 Q240 560 160 550 M35 640 Q60 570 90 560 L120 600 Q90 640 60 655Z" />
      <path d="M230 80 Q240 60 260 80 Q290 70 300 100 Q290 130 260 125 Q255 160 235 145 Q240 110 230 80Z M325 60 L350 260 M310 60 L330 200" />
      <path d="M395 430 Q400 250 480 120 L520 60 L560 90 Q540 200 650 180 L670 100 Q660 260 560 360 Q480 440 395 430Z M420 390 L465 330 Q460 400 420 410" />
      <path d="M735 200 Q740 140 790 137 Q850 145 853 210 Q850 270 830 275 L750 270 M785 137 Q790 100 825 60 M975 60 L1060 165 Q1075 190 1080 150 L1000 60 M1085 60 Q1105 90 1120 90" />
      <path d="M980 300 Q975 220 1000 200 Q1040 210 1060 330 Q1040 390 1000 375 Q980 350 980 300 M1135 195 L1185 150 Q1185 110 1200 105 Q1215 120 1210 150 Q1220 170 1200 180 L1150 220 Q1150 260 1130 250" />
      <path d="M650 480 Q620 430 665 415 Q660 360 690 355 Q720 370 700 420 Q715 460 695 500 Q670 520 650 480 M655 500 v30 M690 500 v25" />
      <path d="M780 560 Q770 480 790 450 Q820 480 830 400 Q860 460 890 330 Q910 340 895 400 Q900 450 880 460 M780 560 Q790 680 850 660 Q890 640 890 520 Q870 460 830 460 M790 390 Q800 350 810 390 Q800 410 790 390" />
      <path d="M455 585 Q480 530 560 512 Q560 620 490 690 Q470 650 455 585Z" />
      <path transform="translate(516 600) scale(.6 1)" d={heartPath} />
      <path transform="translate(1006 510) scale(.9 1.300)" d={heartPath} />
      <path transform="translate(1125 450) scale(.7 1.700)" d={spiralPath} />
      <path transform="translate(768 1120) scale(.8 1.500)" d={spiralPath} />
      <path transform="translate(75 770) scale(.7 1.500)" d={spiralPath} />
      <path transform="translate(1198 738) scale(.7 1.200)" d={starPath} />
      <path transform="translate(90 1155) scale(.7 1.200)" d={starPath} />
      <path d="M1190 440 Q1190 380 1220 380 Q1250 390 1245 450 L1240 480 Q1260 540 1300 545 M1225 460 Q1230 520 1250 560 M1210 460 Q1215 540 1235 580 M1190 440 Q1200 460 1220 450" />
      <path d="M320 540 Q310 460 335 455 Q390 500 385 600 Q370 640 345 600 Q325 600 320 540 M345 600 L355 680 M370 600 L380 690 M585 760 Q590 720 610 740 L620 900 M640 780 Q645 720 665 740 L680 870 M680 700 Q700 650 740 680 Q750 780 690 840 Z M600 880 Q570 940 610 1000" />
      <path d="M180 940 Q200 800 240 805 Q280 830 275 910 Q250 900 250 940 Q210 1000 180 940 M320 880 Q320 790 345 780 Q370 800 360 850 Q390 880 375 920 Q340 950 320 880 M335 935 v20 M358 930 v25" />
      <path d="M440 890 Q445 810 490 815 Q560 840 565 930 Q540 970 500 975 Q445 960 440 890Z M480 870 Q490 835 515 860 Q540 900 530 930 Q500 940 480 870Z" />
      <path d="M645 900 Q660 820 690 900 L705 1000 Q690 1090 650 1080 Q620 1050 640 1000Z M20 920 Q30 890 60 910 Q100 910 100 960 L80 980 Q60 940 40 980 Q25 970 20 920" />
      <path d="M795 840 L810 750 L970 1080 L935 1180 L915 1130 L795 870 M825 830 L945 1120 M880 1000 L940 900 L990 960 M970 860 Q960 750 1000 680 Q980 640 1020 620 Q1070 640 1090 720 Q1070 780 1030 760" />
      <path d="M1020 1235 L1140 980 Q1170 870 1205 840 M1145 1050 L1030 1245" />
      <path d="M175 1175 L195 1095 L260 1245 M175 1175 L205 1245 M195 1110 Q215 1080 225 1130 M320 1140 Q330 1080 370 1080 Q400 1060 440 1120 L420 1245 M325 1140 L340 1245 M350 1130 L360 1245 M385 1130 L382 1245 M320 1140 Q380 1110 440 1120 M555 1245 L578 1165 L605 1245 M565 1215 L600 1225 M735 1245 Q750 1230 765 1245 M0 1095 L30 1140 Q35 1165 15 1155 L0 1130" />
      <ellipse cx="905" cy="143" rx="6" ry="12" />
      <ellipse cx="638" cy="343" rx="5" ry="10" />
      <ellipse cx="1268" cy="708" rx="5" ry="10" />
      <ellipse cx="140" cy="812" rx="6" ry="12" />
      <ellipse cx="518" cy="1147" rx="7" ry="14" />
      <ellipse cx="1242" cy="1228" rx="6" ry="12" />
      <ellipse cx="958" cy="770" rx="6" ry="12" />
    </g>
  </Wallpaper>
);

const amounts = [
  ["$50", "$100", "$250"],
  ["$500", "$1,000", "$5,000"],
];

export default function App() {
  return (
    <Screen>
      <GlobalStyle />
      <StatusBar>
        <Cluster $gap={14}>
          <span>05:59</span>
          <Plane />
          <Plane />
          <Glyph w={29} h={29} box="848 75 84 87">
            <path fillRule="evenodd" fill="currentColor" stroke="none" d="M858 75 H922 Q932 75 932 85 V152 Q932 162 922 162 H858 Q848 162 848 152 V85 Q848 75 858 75Z M874 92 A10 10 0 1 0 874 112 A10 10 0 1 0 874 92Z M857 140 L873 123 L888 137 L911 112 L923 125 V147 Q922 153 914 153 H866 Q857 153 857 146Z" />
          </Glyph>
          <Glyph w={38} h={12} box="0 0 38 12">
            <circle cx="19" cy="6" r="5" fill="currentColor" stroke="none" />
          </Glyph>
        </Cluster>
        <Cluster $gap={14}>
          <Glyph w={28} h={32} box="400 70 81 97">
            <path d="M407 96 L470 141 L445 160 V76 L470 95 L407 141" strokeWidth="10" />
            <path d="M404 118 h2 M475 118 h2" strokeWidth="10" />
          </Glyph>
          <Glyph w={29} h={30} box="526 74 85 89">
            <path d="M588 76 V122 L562 95Z M537 101 H548 L588 142 V162 L556 136 H537 Q527 136 527 126 V111 Q527 101 537 101Z" fill="currentColor" stroke="none" />
            <path d="M533 81 L607 158" strokeWidth="8" />
          </Glyph>
          <Cluster $gap={7}>
            <NetLabel>
              <span>Vo))</span>
              <span>LTE2</span>
            </NetLabel>
            <NetLabel>
              <span>4G+</span>
              <Glyph w={22} h={14} box="798 125 64 42">
                <path d="M815 128 V163 M802 152 L815 164 L828 152 M847 164 V129 M834 141 L847 128 L860 141" strokeWidth="6" />
              </Glyph>
            </NetLabel>
          </Cluster>
          <Glyph w={28} h={30} box="912 74 81 89">
            <path d="M917 147 V157 M940 123 V157 M963 99 V157 M987 79 V157" strokeWidth="10" />
          </Glyph>
          <Cluster $gap={6}>
            <span>91%</span>
            <Glyph w={21} h={33} box="1263 69 61 99">
              <path d="M1263 96 V90 Q1263 83 1272 83 H1280 V75 Q1280 69 1287 69 H1301 Q1307 69 1307 75 V83 H1315 Q1324 83 1324 90 V96Z" fill="#70747f" stroke="none" />
              <path d="M1263 96 H1324 V158 Q1324 168 1314 168 H1273 Q1263 168 1263 158Z" fill="currentColor" stroke="none" />
            </Glyph>
          </Cluster>
        </Cluster>
      </StatusBar>

      <Header>
        <IconButton aria-label="Back">
          <Glyph w={43} h={41} box="145 395 125 122">
            <path d="M262 456 H154 M209 404 L154 456 L209 509" strokeWidth="17" />
          </Glyph>
        </IconButton>
        <Avatar viewBox="0 0 112 112" role="img" aria-label="LA! logo">
          <defs>
            <filter id="logoShade" x="-20%" y="-20%" width="140%" height="140%">
              <feDropShadow dx="4" dy="1" stdDeviation="0.8" floodColor="#ee7b3f" floodOpacity="1" />
            </filter>
          </defs>
          <circle cx="56" cy="56" r="56" fill="#06304c" />
          <circle cx="56" cy="56" r="51" fill="#ffc905" />
          <path d="M7.500 56 A48.500 48.500 0 0 1 104.500 56" fill="none" stroke="#fffdf0" strokeWidth="5" />
          <circle cx="56" cy="56" r="43" fill="#ffc905" stroke="#f9a90f" strokeWidth="6" />
          <g filter="url(#logoShade)" fontFamily="Lato, sans-serif" fontWeight="900" fill="#f6f6e6" stroke="#06304c" strokeLinejoin="round" paintOrder="stroke" strokeWidth="11">
            <text x="74" y="81" fontSize="58" transform="rotate(5 74 81)">!</text>
            <text x="39" y="75" fontSize="48" transform="rotate(7 39 75)">A</text>
            <text x="16" y="76" fontSize="64" transform="rotate(12 16 76)">L</text>
          </g>
        </Avatar>
        <TitleBlock>
          <Title>FiLot - Powered by AI</Title>
          <Subtitle>bot</Subtitle>
        </TitleBlock>
        <IconButton aria-label="More options">
          <Glyph w={26} h={43} box="0 0 26 43">
            <g fill="currentColor" stroke="none">
              <circle cx="13" cy="5.500" r="5.400" />
              <circle cx="13" cy="21.500" r="5.400" />
              <circle cx="13" cy="37.500" r="5.400" />
            </g>
          </Glyph>
        </IconButton>
      </Header>

      <Chat>
        <Doodles />
        <EarlierBubble />
        <Bubble $max={929}>
          I received your selection, but I'm not sure how to process it. Please use <Command href="#help">/help</Command> to see available commands.
          <Time>05:50</Time>
        </Bubble>
        <Outgoing>
          <Emoji name="lens" /> Explore
          <Time $light>
            05:57
            <Checks />
          </Time>
        </Outgoing>
        <Outgoing $last>
          <Emoji name="lens" /> Explore
          <Time $light>
            05:58
            <Checks />
          </Time>
        </Outgoing>

        <Bubble $spaced $radius="45px 45px 16px 0">
          <Strong>
            <Emoji name="chart" /> Explore DeFi Opportunities <Emoji name="chart" />
          </Strong>
          <br />
          <br />
          Select what you'd like to explore:
          <Time>05:58</Time>
        </Bubble>
        <Keyboard $max={812}>
          <KeyRow>
            <Key>
              <KeyLabel>
                <Emoji name="trophy" size={46} /> Top Pools
              </KeyLabel>
            </Key>
            <Key>
              <KeyLabel $fade>
                <Emoji name="chart" size={46} /> Simulate Returns
              </KeyLabel>
            </Key>
          </KeyRow>
        </Keyboard>

        <Bubble $max={891} $radius="45px 45px 16px 0">
          <Strong>
            <Emoji name="bag" /> Investment Return Simulator <Emoji name="bag" />
          </Strong>
          <br />
          <br />
          Choose an investment amount to simulate potential returns based on current APRs and liquidity pool data:
          <br />
          <br />
          <em>This is a simulation only and not financial advice.</em>
          <Time>05:58</Time>
        </Bubble>
        <Keyboard $max={889}>
          {amounts.map((row) => (
            <KeyRow key={row[0]}>
              {row.map((amount) => (
                <Key key={amount}>
                  <KeyLabel>
                    {amount} <Emoji name="bag" size={46} />
                  </KeyLabel>
                </Key>
              ))}
            </KeyRow>
          ))}
          <KeyRow>
            <Key>
              <KeyLabel>
                <Emoji name="eye" size={46} /> View My Positions
              </KeyLabel>
            </Key>
            <Key>
              <KeyLabel>
                <Emoji name="pencil" size={46} /> Custom Amount
              </KeyLabel>
            </Key>
          </KeyRow>
        </Keyboard>
      </Chat>

      <Composer onSubmit={(e) => e.preventDefault()}>
        <MenuButton type="button" aria-label="Bot menu">
          <Glyph w={43} h={33} box="0 0 43 33">
            <path d="M3 3 H40 M3 16.500 H40 M3 30 H40" stroke="#fff" strokeWidth="6" />
          </Glyph>
        </MenuButton>
        <IconButton type="button" aria-label="Stickers">
          <Glyph w={62} h={62} box="476 156 180 186">
            <path d="M575 335 H545 Q483 335 483 275 V222 Q483 163 545 163 H588 Q649 163 649 222 V258 Q649 335 575 335 M585 335 V305 Q585 268 625 268 H649" strokeWidth="14" />
            <path d="M532 271 Q548 291 572 291 Q586 290 598 280" strokeWidth="13" />
            <ellipse cx="537" cy="233" rx="11" ry="14" fill="currentColor" stroke="none" />
            <ellipse cx="596" cy="233" rx="11" ry="14" fill="currentColor" stroke="none" />
          </Glyph>
        </IconButton>
        <Field>
          <Input type="text" placeholder="Message" aria-label="Message" />
        </Field>
        <ComposerTools>
          <IconButton type="button" aria-label="Bot keyboard">
            <Glyph w={60} h={60} box="566 158 174 181">
              <rect x="573" y="165" width="160" height="167" rx="48" strokeWidth="14" />
              <g strokeWidth="13">
                <rect x="608" y="202" width="34" height="35" rx="8" />
                <rect x="665" y="202" width="34" height="35" rx="8" />
                <rect x="608" y="261" width="34" height="35" rx="8" />
                <rect x="665" y="261" width="34" height="35" rx="8" />
              </g>
            </Glyph>
          </IconButton>
          <IconButton type="button" aria-label="Attach">
            <Glyph w={52} h={60} box="951 160 151 180">
              <path d="M956 227 L997 183 A54 56 0 0 1 1075 264 L1022 320 A38 40 0 0 1 966 264 L1016 211 A25 26 0 0 1 1052 244 L1003 289" strokeWidth="13" />
            </Glyph>
          </IconButton>
          <IconButton type="button" aria-label="Record voice message">
            <Glyph w={47} h={66} box="1315 149 140 200">
              <rect x="1352" y="157" width="66" height="124" rx="33" strokeWidth="14" />
              <path d="M1322 249 Q1325 311 1385 311 Q1444 311 1447 249" strokeWidth="12" />
              <path d="M1385 315 V340" strokeWidth="17" />
            </Glyph>
          </IconButton>
        </ComposerTools>
      </Composer>

      <ReplyPanel>
        <ReplyKey $wide>
          <Emoji name="bag" /> Invest
        </ReplyKey>
        <ReplyKey>
          <Emoji name="lens" /> Explore
        </ReplyKey>
        <ReplyKey>
          <Emoji name="person" /> Account
        </ReplyKey>
      </ReplyPanel>

      <NavBar>
        <IconButton aria-label="Recent apps">
          <Glyph w={41} h={44} box="0 0 41 44">
            <path d="M3 2 V42 M20.500 2 V42 M38 2 V42" strokeWidth="5" />
          </Glyph>
        </IconButton>
        <IconButton aria-label="Home">
          <Glyph w={46} h={48} box="0 0 46 48">
            <rect x="3" y="3" width="40" height="42" rx="13" strokeWidth="6" />
          </Glyph>
        </IconButton>
        <IconButton aria-label="Go back">
          <Glyph w={32} h={44} box="-7 0 32 44">
            <path d="M22 3 L4 22 L22 41" strokeWidth="5" />
          </Glyph>
        </IconButton>
      </NavBar>
    </Screen>
  );
}
